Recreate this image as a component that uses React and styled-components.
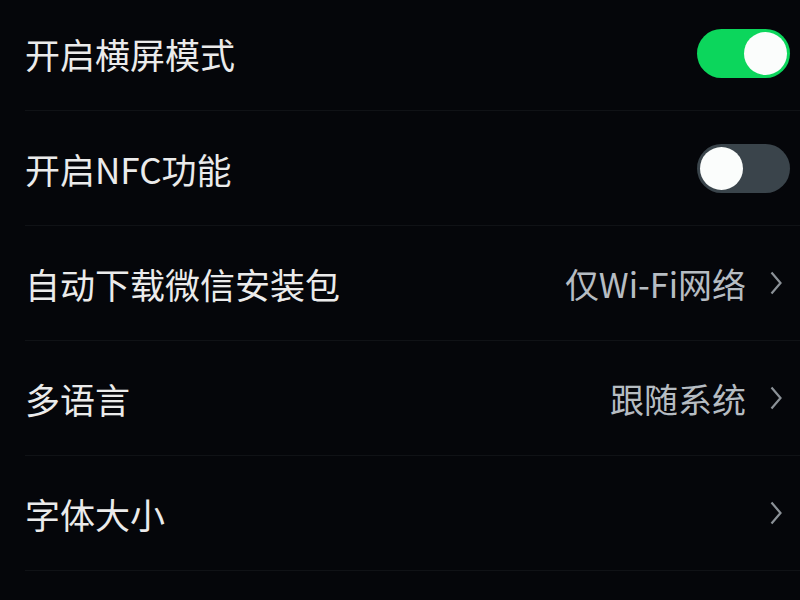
import React, { useState } from 'react'
import styled, { createGlobalStyle } from 'styled-components'

const GlobalStyle = createGlobalStyle`
  html, body {
    margin: 0;
    padding: 0;
    background: #05060a;
    overflow: hidden;
  }
  body {
    font-family: "Noto Sans CJK SC", "Noto Sans", sans-serif;
  }
`

const Page = styled.div`
  width: 800px;
  height: 600px;
  background: #05060a;
  overflow: hidden;
`

const List = styled.ul`
  list-style: none;
  margin: -4px 0 0 0;
  padding: 0;
`

const Row = styled.li`
  display: flex;
  align-items: center;
  height: 115px;
  margin-left: 25px;
  padding-right: 10px;
  border-bottom: 1px solid #101216;
  box-sizing: border-box;
`

const Label = styled.span`
  flex: 1;
  font-size: 35px;
  color: #ebebeb;
  line-height: 1;
`

const Value = styled.span`
  font-size: 34px;
  color: #b6bcc2;
  line-height: 1;
  padding-top: 2px;
`

const Chevron = styled.svg`
  width: 12px;
  height: 24px;
  margin: 0 8px 0 24px;
  flex-shrink: 0;
`

const Track = styled.button`
  position: relative;
  width: 93px;
  height: 49px;
  padding: 0;
  border: none;
  border-radius: 25px;
  cursor: pointer;
  background: ${p => (p.$on ? '#0cd65c' : '#3a444b')};
`

const Knob = styled.span`
  position: absolute;
  top: 3px;
  left: ${p => (p.$on ? '47px' : '3px')};
  width: 43px;
  height: 43px;
  border-radius: 50%;
  background: #fbfdfc;
  transition: left 0.15s;
`

const Toggle = ({ initial }) => {
  const [on, setOn] = useState(initial)
  return (
    <Track $on={on} onClick={() => setOn(!on)}>
      <Knob $on={on} />
    </Track>
  )
}

const Arrow = () => (
  <Chevron viewBox="0 0 12 24">
    <path d="M1.5 1.5 L10.5 12 L1.5 22.5" fill="none" stroke="#8b9197" strokeWidth="2.2" />
  </Chevron>
)

const rows = [
  { label: '开启横屏模式', toggle: true, on: true },
  { label: '开启NFC功能', toggle: true, on: false },
  { label: '自动下载微信安装包', value: '仅Wi-Fi网络' },
  { label: '多语言', value: '跟随系统' },
  { label: '字体大小', value: '' }
]

export default function App() {
  return (
    <Page>
      <GlobalStyle />
      <List>
        {rows.map(r => (
          <Row key={r.label}>
            <Label>{r.label}</Label>
            {r.toggle ? (
              <Toggle initial={r.on} />
            ) : (
              <>
                {r.value && <Value>{r.value}</Value>}
                <Arrow />
              </>
            )}
          </Row>
        ))}
      </List>
    </Page>
  )
}
